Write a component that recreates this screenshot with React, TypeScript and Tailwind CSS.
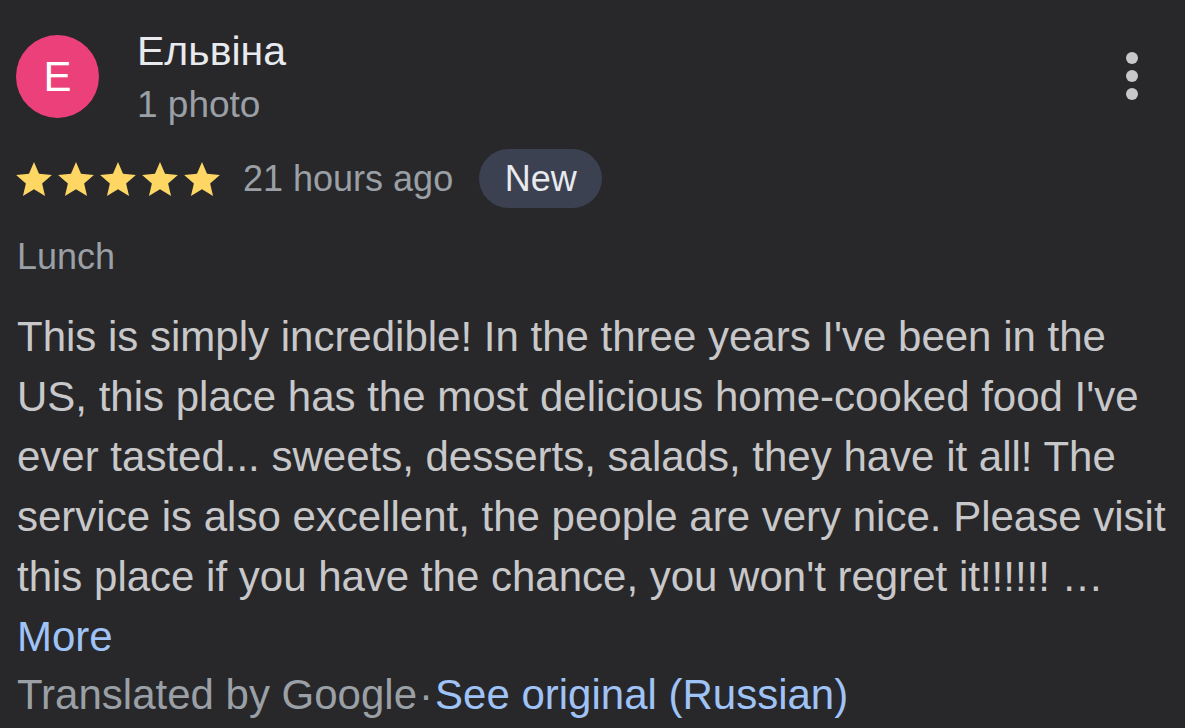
import React from "react";

function Star() {
  return (
    <svg width="36" height="34" viewBox="2 2 20 19">
      <path
        d="M12 17.27L18.18 21l-1.64-7.03L22 9.24l-7.19-.61L12 2 9.19 8.63 2 9.24l5.46 4.73L5.82 21z"
        fill="#fdd663"
      />
    </svg>
  );
}

const lines = [
  "This is simply incredible! In the three years I've been in the",
  "US, this place has the most delicious home-cooked food I've",
  "ever tasted... sweets, desserts, salads, they have it all! The",
  "service is also excellent, the people are very nice. Please visit",
  "this place if you have the chance, you won't regret it!!!!!! …",
];

export default function App() {
  return (
    <div
      className="w-[1185px] h-[728px] bg-[#28282b] overflow-hidden text-[#c8c8ca]"
      style={{ fontFamily: '"Liberation Sans", Arial, sans-serif' }}
    >
      <div className="pl-[17px] pr-[20px] pt-[27px]">
        <div className="flex items-start">
          <div className="mt-[8px] -ml-[1px] w-[83px] h-[83px] rounded-full bg-[#ec407a] flex items-center justify-center text-white text-[42px] leading-none shrink-0">
            E
          </div>
          <div className="ml-[38px] flex flex-col">
            <div className="text-[41px] leading-[48px] text-[#e8eaed]">Ельвіна</div>
            <div className="mt-[8px] text-[37px] leading-[44px] text-[#9aa0a6]">1 photo</div>
          </div>
          <div className="ml-auto mr-[27px] mt-[25px] flex flex-col gap-[6px]">
            <div className="w-[12px] h-[12px] rounded-full bg-[#c8c8ca]" />
            <div className="w-[12px] h-[12px] rounded-full bg-[#c8c8ca]" />
            <div className="w-[12px] h-[12px] rounded-full bg-[#c8c8ca]" />
          </div>
        </div>
        <div className="flex items-center mt-[22px] h-[59px]">
          <div className="flex items-center gap-[6px] -ml-[1px]">
            <Star />
            <Star />
            <Star />
            <Star />
            <Star />
          </div>
          <span className="ml-[23px] text-[36px] leading-none text-[#9aa0a6]">21 hours ago</span>
          <span className="ml-[26px] h-[59px] w-[123px] rounded-full bg-[#3c4152] text-[#e8eaed] text-[36px] leading-none flex items-center justify-center">
            New
          </span>
        </div>
        <div className="mt-[25px] text-[36px] leading-[48px] text-[#9aa0a6]">Lunch</div>
        <div className="mt-[26px] text-[42px] leading-[60px] text-[#c8c8ca]">
          {lines.map((l, i) => (
            <div key={i} className="whitespace-nowrap">
              {l}
            </div>
          ))}
          <div className="text-[#a0c3f7]">More</div>
          <div className="whitespace-nowrap -mt-[2px]">
            <span className="text-[#9aa0a6]">Translated by Google</span>
            <span className="text-[#9aa0a6] mx-[2px]">·</span>
            <span className="text-[#a0c3f7]">See original (Russian)</span>
          </div>
        </div>
      </div>
    </div>
  );
}
